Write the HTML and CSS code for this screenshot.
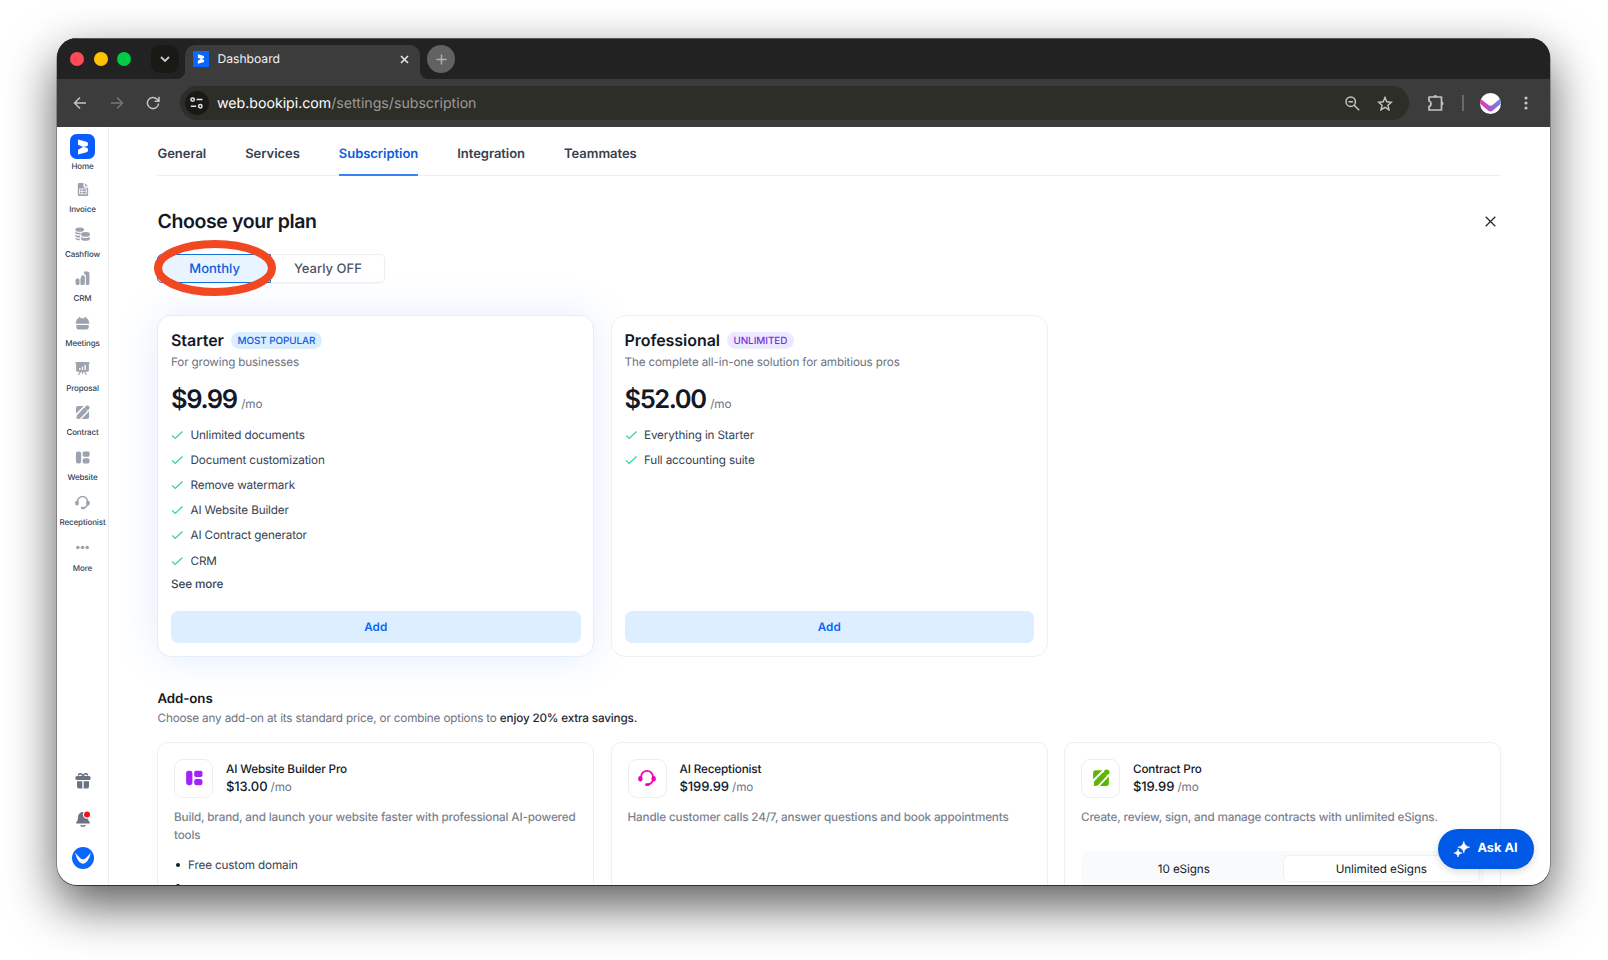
FILE: index.html
```html
<!DOCTYPE html>
<html lang="en">
<head>
<meta charset="utf-8">
<title>Dashboard</title>
<link rel="stylesheet" href="styles.css">
</head>
<body>
<svg class="defs" width="0" height="0" aria-hidden="true">
  <symbol id="website" viewBox="0 0 16 16"><rect x="1" y="1.5" width="5.6" height="13" rx="2.2"/><rect x="8.2" y="1.5" width="7.3" height="5.6" rx="1.5"/><rect x="8.2" y="8.9" width="7.3" height="5.6" rx="2"/></symbol>
  <symbol id="headset" viewBox="0 0 16 16"><path d="M2.7 8.2V7A5.3 5.3 0 0 1 13.3 7v1.5c0 3-1.800 5-4.600 5.300" fill="none" stroke="currentColor" stroke-width="1.6"/><rect x=".2" y="6.200" width="3.800" height="5" rx="1.800"/><rect x="12" y="6.200" width="3.800" height="5" rx="1.800"/><rect x="6.300" y="12.600" width="4" height="2.600" rx="1.300"/></symbol>
  <symbol id="contract" viewBox="0 0 16 16"><path d="M3.300 1H9.200L1 9.200V3.300A2.300 2.300 0 0 1 3.300 1Z"/><path d="M9.900 2.600l3.500 3.500-8.300 8.500-3.500.4.300-3.900Z"/><circle cx="13.100" cy="2.900" r="2.400"/><path d="M15 6.600v6.100A2.300 2.300 0 0 1 12.700 15H6.900Z"/></symbol>
  <symbol id="check" viewBox="0 0 12 12"><path d="M1.200 6.500L4.200 9.500 11.500 2.500" fill="none" stroke="#34d399" stroke-width="1.200"/></symbol>
  <symbol id="brand" viewBox="0 0 12 16"><path d="M1 .5L9.500 2.700Q11 3.100 11 4.600V5.500Q11 7 9.500 7.300L6 8 9.500 8.600Q11 9 11 10.500V11.500Q11 12.800 9.600 13.200L1 15.500V10.800L6 8 1 5.800Z"/></symbol>
</svg>

<div class="window">
  <header class="tabstrip">
    <div class="lights"><i class="red"></i><i class="yellow"></i><i class="green"></i></div>
    <span class="tab-search"><svg width="10" height="7" viewBox="0 0 10 7"><path d="M1 1l4 4 4-4" fill="none" stroke="#ccc" stroke-width="1.800"/></svg></span>
    <div class="tab">
      <span class="favicon"><svg width="8" height="10"><use href="#brand"/></svg></span>
      <span class="tab-title">Dashboard</span>
      <svg width="9" height="9" viewBox="0 0 9 9"><path d="M1 1l7 7M8 1L1 8" stroke="#e3e3e3" stroke-width="1.700"/></svg>
    </div>
    <span class="new-tab"><svg width="11" height="11" viewBox="0 0 11 11"><path d="M5.500 .5v10M.5 5.500h10" stroke="#b0b0b0" stroke-width="1.500"/></svg></span>
  </header>

  <div class="toolbar">
    <svg class="nav-icon" width="14" height="14" viewBox="0 0 14 14"><path d="M13 7H1.800M7 1.500L1.500 7 7 12.500" fill="none" stroke="#c4c4c4" stroke-width="1.500"/></svg>
    <svg class="nav-icon" width="14" height="14" viewBox="0 0 14 14"><path d="M1 7h11.200M7 1.500L12.500 7 7 12.500" fill="none" stroke="#777" stroke-width="1.500"/></svg>
    <svg class="nav-icon" width="14" height="14" viewBox="0 0 14 14"><path d="M12.600 7.500A5.600 5.600 0 1 1 11.200 3.300L13 5M13 .8V5.200H8.600" fill="none" stroke="#c4c4c4" stroke-width="1.500"/></svg>
    <div class="address">
      <span class="site-info"><svg width="13" height="12" viewBox="0 0 13 12"><g fill="none" stroke="#e3e3e3" stroke-width="1.500"><circle cx="2.600" cy="2.600" r="1.700"/><path d="M6.500 2.600H12.500M.8 9.300H6.200"/><circle cx="10.300" cy="9.300" r="1.700"/></g></svg></span>
      <span class="url"><b>web.bookipi.com</b>/settings/subscription</span>
      <svg width="15" height="15" viewBox="0 0 15 15"><g fill="none" stroke="#c4c4c4" stroke-width="1.500"><circle cx="5.700" cy="5.700" r="4.700"/><path d="M9.200 9.200l5 5M3.500 5.700h4.400"/></g></svg>
      <svg width="16" height="15" viewBox="0 0 16 15"><path d="M8 1.500l1.800 4.300 4.700.4-3.600 3 1.100 4.600L8 11.300l-4 2.500 1.100-4.600-3.600-3 4.700-.4Z" fill="none" stroke="#c4c4c4" stroke-width="1.400"/></svg>
    </div>
    <svg class="puzzle" width="18" height="18" viewBox="0 0 18 18"><path d="M2 3H14.500V16H2V12.500C4.600 12 4.600 7.500 2 7Z" fill="none" stroke="#c4c4c4" stroke-width="1.700" stroke-linejoin="round"/><path d="M6.300 3a2 2 0 0 1 4 0ZM14.500 7.500a2 2 0 0 1 0 4Z" fill="#c4c4c4"/></svg>
    <i class="divider"></i>
    <svg class="profile" width="21" height="21" viewBox="0 0 21 21"><defs><linearGradient id="pg"><stop offset="0" stop-color="#f02fb4"/><stop offset="1" stop-color="#5c8ce8"/></linearGradient><clipPath id="pc"><circle cx="10.500" cy="10.500" r="10.500"/></clipPath></defs><circle cx="10.500" cy="10.500" r="10.500" fill="#fff"/><path clip-path="url(#pc)" d="M0 5.500L8.500 12Q10.500 13.300 12.500 12L21 5V10.500L13 17.500Q10.500 19.300 8 17.500L0 10.500Z" fill="url(#pg)"/></svg>
    <svg class="menu" width="4" height="14" viewBox="0 0 4 14" fill="#c4c4c4"><circle cx="2" cy="2" r="1.600"/><circle cx="2" cy="7" r="1.600"/><circle cx="2" cy="12" r="1.600"/></svg>
  </div>

  <div class="page">
    <nav class="sidebar">
      <div class="side-items">
        <a class="side-item home"><span class="home-icon"><svg width="12" height="16"><use href="#brand"/></svg></span><span>Home</span></a>
        <a class="side-item"><svg viewBox="0 0 16 16"><path d="M4.500 1H9v3a2 2 0 0 0 2 2h3v7.500A1.500 1.500 0 0 1 12.500 15h-8A1.500 1.500 0 0 1 3 13.500v-11A1.500 1.500 0 0 1 4.500 1ZM10.500 1.300L13.600 4.600H11.500a1 1 0 0 1-1-1Z"/><path d="M4.800 7.300h7.600v5.400H4.800Z M4.800 10h7.600M7.500 7.300v5.400" stroke="#fff" stroke-width=".8" fill="none"/></svg><span>Invoice</span></a>
        <a class="side-item"><svg viewBox="0 0 16 16"><ellipse cx="5" cy="2.800" rx="4.600" ry="2.300"/><path d="M.4 4.900C1.500 6.300 4 6.600 6 6.200v1.700C3 8.300 1 7.500.4 6.700ZM.4 8c.8 1.100 2.600 1.500 4.900 1.300v2C2.600 11.500.9 10.700.4 9.800ZM.6 11.400c.8.900 2.500 1.200 4.600 1.100v1.600c-2 0-4-.4-4.600-1.400Z"/><ellipse cx="11.200" cy="7.900" rx="4.700" ry="2.500"/><path d="M6.500 10.400c1.500 1.900 7.900 1.900 9.400 0v2.300c-.7 2.700-8.700 2.700-9.400 0Z"/></svg><span>Cashflow</span></a>
        <a class="side-item"><svg viewBox="0 0 16 16"><rect x=".6" y="8" width="4.200" height="7" rx="1.800"/><path d="M7.500 4.500H8.500A2 2 0 0 1 10.500 6.500V13a2 2 0 0 1-2 2H7.200A1.400 1.400 0 0 1 5.800 13.500V8Z"/><path d="M9.500 .5h3.900A2 2 0 0 1 15.400 2.500v10.500a2 2 0 0 1-2 2h-.8a1 1 0 0 1-1-1V5.500C11.500 4 10.500 3.300 9.500 3Z"/></svg><span>CRM</span></a>
        <a class="side-item"><svg viewBox="0 0 16 16"><path d="M4 1h1.800v1.300h4.400V1H12v1.400a3 3 0 0 1 2.600 2.400V7H1.400V4.800A3 3 0 0 1 4 2.400Z"/><rect x=".7" y="6" width="14.600" height="2.300" rx="1"/><path d="M1.400 9.500h13.200V12a2.500 2.500 0 0 1-2.500 2.500H3.900A2.500 2.500 0 0 1 1.400 12Z"/></svg><span>Meetings</span></a>
        <a class="side-item"><svg viewBox="0 0 16 16"><path d="M.5 1h15v1.600h-.7V10a1.500 1.500 0 0 1-1.500 1.500H11l1.800 2.800-1 .9L9.500 11.500H8.800v2H7.200v-2H6.500L4.200 15.200l-1-.9L5 11.500H2.700A1.500 1.500 0 0 1 1.200 10V2.600H.5Z"/><path d="M5.200 9.500V7.500M8 9.500V6M10.800 9.500V4.300" stroke="#fff" stroke-width="1.400"/></svg><span>Proposal</span></a>
        <a class="side-item"><svg><use href="#contract"/></svg><span>Contract</span></a>
        <a class="side-item"><svg><use href="#website"/></svg><span>Website</span></a>
        <a class="side-item"><svg><use href="#headset"/></svg><span>Receptionist</span></a>
        <a class="side-item more"><svg viewBox="0 0 16 16"><circle cx="3" cy="8" r="1.900"/><circle cx="8" cy="8" r="1.900"/><circle cx="13" cy="8" r="1.900"/></svg><span>More</span></a>
      </div>
      <div class="side-bottom">
        <svg width="16" height="16" viewBox="0 0 16 16" fill="#6b7280"><path d="M8 3C6.500 0 3.500 0 3.500 2.500M8 3C9.500 0 12.500 0 12.500 2.500" fill="none" stroke="#6b7280" stroke-width="1.500"/><rect x=".4" y="3" width="15.200" height="4" rx="1.600"/><path d="M2 8.300H7.300V15.500H4A2 2 0 0 1 2 13.500ZM8.700 8.300H14V13.500A2 2 0 0 1 12 15.500H8.700Z"/></svg>
        <svg width="16" height="16" viewBox="0 0 16 16" fill="#6b7280"><path d="M8 1a5 5 0 0 0-5 5c0 3-.8 4.300-1.700 5.300-.6.700-.2 1.200.5 1.200h12.400c.7 0 1.100-.5.5-1.200C13.800 10.300 13 9 13 6A5 5 0 0 0 8 1Z"/><path d="M5.700 14.200c1.300 1.300 3.300 1.300 4.600 0" fill="none" stroke="#6b7280" stroke-width="1.300"/><circle cx="12" cy="3.600" r="3.600" fill="#f80b1c" stroke="#fff" stroke-width="1.200"/></svg>
        <svg width="22" height="22" viewBox="0 0 22 22"><circle cx="11" cy="11" r="11" fill="#0b66fb"/><path d="M3.300 5.500C7 10.500 9 12.300 11 12.300S15 10.500 18.700 5.500C17.500 13 13.500 16.800 11 16.800S4.500 13 3.300 5.500Z" fill="#fff"/></svg>
      </div>
    </nav>

    <main class="content">
      <div class="tabs"><a>General</a><a>Services</a><a class="active">Subscription</a><a>Integration</a><a>Teammates</a></div>
      <div class="heading">
        <h1>Choose your plan</h1>
        <svg width="11" height="11" viewBox="0 0 11 11"><path d="M.7 .7l9.600 9.600M10.300 .7L.7 10.300" stroke="#1f2937" stroke-width="1.300"/></svg>
      </div>
      <div class="period">
        <span class="period-option selected">Monthly</span><span class="period-option">Yearly OFF</span>
        <svg class="highlight" width="122" height="56" viewBox="0 0 122 56"><ellipse cx="61" cy="28" rx="57" ry="24" fill="none" stroke="#f24822" stroke-width="8"/></svg>
      </div>

      <section class="grid plans">
        <article class="plan popular">
          <div class="plan-name"><h2>Starter</h2><span class="badge">MOST POPULAR</span></div>
          <p class="plan-sub">For growing businesses</p>
          <div class="price"><strong>$9.99</strong><span>/mo</span></div>
          <ul class="features">
            <li><svg><use href="#check"/></svg>Unlimited documents</li>
            <li><svg><use href="#check"/></svg>Document customization</li>
            <li><svg><use href="#check"/></svg>Remove watermark</li>
            <li><svg><use href="#check"/></svg>AI Website Builder</li>
            <li><svg><use href="#check"/></svg>AI Contract generator</li>
            <li><svg><use href="#check"/></svg>CRM</li>
          </ul>
          <a class="see-more">See more</a>
          <div class="add">Add</div>
        </article>
        <article class="plan">
          <div class="plan-name"><h2>Professional</h2><span class="badge violet">UNLIMITED</span></div>
          <p class="plan-sub">The complete all-in-one solution for ambitious pros</p>
          <div class="price"><strong>$52.00</strong><span>/mo</span></div>
          <ul class="features">
            <li><svg><use href="#check"/></svg>Everything in Starter</li>
            <li><svg><use href="#check"/></svg>Full accounting suite</li>
          </ul>
          <div class="add">Add</div>
        </article>
      </section>

      <h3>Add-ons</h3>
      <p class="addons-sub">Choose any add-on at its standard price, or combine options to <b>enjoy 20% extra savings.</b></p>

      <section class="grid addons">
        <article class="addon">
          <div class="addon-head"><span class="addon-icon purple"><svg><use href="#website"/></svg></span><div><h4>AI Website Builder Pro</h4><div class="addon-price"><b>$13.00</b> /mo</div></div></div>
          <p class="addon-text">Build, brand, and launch your website faster with professional AI-powered tools</p>
          <ul class="bullets"><li>Free custom domain</li><li></li></ul>
        </article>
        <article class="addon">
          <div class="addon-head"><span class="addon-icon pink"><svg><use href="#headset"/></svg></span><div><h4>AI Receptionist</h4><div class="addon-price"><b>$199.99</b> /mo</div></div></div>
          <p class="addon-text">Handle customer calls 24/7, answer questions and book appointments</p>
        </article>
        <article class="addon">
          <div class="addon-head"><span class="addon-icon lime"><svg><use href="#contract"/></svg></span><div><h4>Contract Pro</h4><div class="addon-price"><b>$19.99</b> /mo</div></div></div>
          <p class="addon-text">Create, review, sign, and manage contracts with unlimited eSigns.</p>
          <div class="segmented"><span>10 eSigns</span><span class="on">Unlimited eSigns</span></div>
        </article>
      </section>
    </main>
    <div class="ask"><svg width="16" height="16" viewBox="0 0 16 16" fill="#fff"><path d="M9.800 .3C10.600 4 12 5.400 15.800 6.200 12 7 10.600 8.400 9.800 12.100 9 8.400 7.600 7 3.800 6.200 7.600 5.400 9 4 9.800 .3Z" stroke="#fff" stroke-width=".5"/><path d="M4 8.200C4.400 10.700 5.400 11.600 7.900 12 5.400 12.400 4.400 13.400 4 15.900 3.600 13.400 2.600 12.400.1 12 2.600 11.600 3.600 10.700 4 8.200Z" stroke="#fff" stroke-width=".8"/></svg>Ask AI</div>
  </div>
</div>
</body>
</html>
```
FILE: styles.css
```css
* { box-sizing: border-box; }
body { margin: 0; width: 1608px; height: 960px; overflow: hidden; padding: 38px 57px 0; background: #fff; font-family: Inter, "Liberation Sans", sans-serif; color: #111827; text-rendering: geometricPrecision; }
h1, h2, h3, h4, p, ul { margin: 0; padding: 0; }
ul { list-style: none; }
svg { display: block; flex: none; }
.defs { position: absolute; }

.window { width: 1493px; height: 847px; border-radius: 20px; overflow: hidden; background: #3c3c3c; box-shadow: 0 .5px 0 .4px rgba(0,0,0,.6), 0 20px 50px rgba(0,0,0,.66); }

/* browser chrome */
.tabstrip { height: 41px; background: #222; display: flex; padding: 6px 0 0 13px; border-top: 1.500px solid #575757; }
.lights { display: flex; gap: 9.500px; padding-top: 7px; width: 80.500px; }
.lights i { width: 14px; height: 14px; border-radius: 50%; }
.red { background: #ff4b58; }
.yellow { background: #ffc400; }
.green { background: #00ca48; }
.tab-search { width: 28px; height: 28px; border-radius: 9px; background: #191a15; display: flex; align-items: center; justify-content: center; margin-right: 6.500px; }
.tab { position: relative; width: 235px; height: 34px; background: #3c3c3c; border-radius: 10px 10px 0 0; display: flex; align-items: center; padding: 0 11px 6px 8px; }
.tab::before, .tab::after { content: ""; position: absolute; bottom: 0; width: 9px; height: 9px; }
.tab::before { left: -9px; background: radial-gradient(circle at 0 0, transparent 9px, #3c3c3c 9.500px); }
.tab::after { right: -9px; background: radial-gradient(circle at 100% 0, transparent 9px, #3c3c3c 9.500px); }
.favicon { width: 16px; height: 16px; background: #0b66fb; fill: #fff; display: flex; align-items: center; justify-content: center; margin-right: 8.500px; }
.tab-title { flex: 1; font-size: 12.200px; line-height: 14px; color: #f1f1f1; letter-spacing: -.05px; }
.new-tab { width: 28px; height: 28px; border-radius: 50%; background: #626262; margin-left: 7px; display: flex; align-items: center; justify-content: center; }
.toolbar { height: 48px; background: #3c3c3c; display: flex; align-items: center; padding: 0 22px 0 16px; }
.nav-icon { margin-right: 22.500px; }
.nav-icon:nth-child(3) { margin-right: 19.500px; }
.address { width: 1229px; height: 34px; border-radius: 17px; background: #2e2e29; display: flex; align-items: center; padding: 0 16px 0 5px; }
.address > svg + svg { margin-left: 17px; }
.site-info { width: 24px; height: 24px; border-radius: 50%; background: #191a15; display: flex; align-items: center; justify-content: center; margin-right: 8.500px; }
.url { flex: 1; font-size: 14.150px; color: #9b9b98; }
.url b { font-weight: 400; color: #fff; }
.puzzle { margin-left: 18px; }
.divider { width: 1.500px; height: 16px; background: #6a6a6a; margin: 0 16px 0 17.500px; }
.menu { margin-left: auto; }

/* page */
.page { position: relative; height: 758px; background: #fff; display: flex; overflow: hidden; }
.sidebar { width: 51.500px; border-right: 1px solid #eceef1; display: flex; flex-direction: column; justify-content: space-between; padding: 7px 0 16px .5px; }
.side-item { display: flex; flex-direction: column; align-items: center; height: 44.700px; padding-top: 2.500px; font-size: 8px; line-height: 10px; font-weight: 500; letter-spacing: -.12px; color: #374151; white-space: nowrap; }
.side-item svg { width: 15px; height: 15px; fill: #9ca3af; color: #9ca3af; margin-bottom: 7px; }
.side-item.home { padding-top: 0; height: 45.500px; }
.home-icon { width: 25px; height: 25px; border-radius: 6.500px; background: #0b5cff; display: flex; align-items: center; justify-content: center; margin-bottom: 2px; }
.side-item .home-icon svg { width: 12px; height: 16px; margin: 0; fill: #fff; }
.side-item.more svg { margin-bottom: 8px; }
.side-bottom { display: flex; flex-direction: column; align-items: center; gap: 22px; }
.side-bottom svg:last-child { margin-top: -2px; }

.content { flex: none; width: 1393px; padding: 0 0 0 48.500px; }
.tabs { width: 1344px; height: 49px; border-bottom: 1.500px solid #eceef1; display: flex; gap: 39px; padding: 16.500px 0 0 .5px; font-size: 13px; letter-spacing: -.04px; line-height: 20px; font-weight: 600; color: #374151; }
.tabs .active { height: 32.500px; color: #0b5cde; border-bottom: 2px solid #3b82f6; }
.heading { width: 1344px; display: flex; align-items: center; justify-content: space-between; padding: 0 5.500px 0 .5px; margin-top: 31px; height: 28px; }
.heading h1 { font-size: 19.500px; font-weight: 600; letter-spacing: -.38px; color: #111827; }
.period { position: relative; display: flex; width: 227.500px; height: 29px; margin-top: 19px; font-size: 13px; font-weight: 500; line-height: 28px; text-align: center; color: #4b5563; }
.period-option { width: 113.500px; padding-left: 1px; border: 1px solid #eceef1; border-left: 0; border-radius: 0 5px 5px 0; box-shadow: 0 1px 1px rgba(0,0,0,.04); }
.period-option.selected { width: 114.500px; border: 1px solid #1570d8; border-radius: 5px 0 0 5px; background: #e8f4ff; color: #0b5cde; }
.highlight { position: absolute; left: -3.500px; top: -14px; }

.grid { width: 1344px; display: grid; grid-template-columns: repeat(3, 1fr); column-gap: 16.500px; }
.plans { margin-top: 32px; height: 341.500px; }
.plan { border: 1px solid #eff0f3; border-radius: 14px; background: #fff; padding: 12px 12.500px 13px 13px; display: flex; flex-direction: column; }
.plan.popular { border-color: #e7edf7; box-shadow: 0 0 40px rgba(59,130,246,.15); }
.plan:not(.popular) { position: relative; }
.plan-name { display: flex; align-items: center; height: 24px; gap: 7px; }
.plan-name h2 { font-size: 16px; font-weight: 600; letter-spacing: -.05px; }
.badge { height: 17px; border-radius: 9px; padding: 0 6.500px; background: #dbeeff; color: #0b5cde; font-size: 9.900px; line-height: 18px; font-weight: 500; letter-spacing: -.05px; }
.badge.violet { background: #ede9fe; color: #7a2ee0; }
.plan-sub { font-size: 11.700px; letter-spacing: -.145px; line-height: 18px; margin-top: 1px; color: #6b7280; }
.price { display: flex; align-items: baseline; height: 34px; line-height: 34px; gap: 4.500px; margin-top: 11.500px; }
.price strong { font-size: 25.500px; font-weight: 600; letter-spacing: -1.400px; }
.price span { font-size: 11.700px; letter-spacing: -.1px; color: #6b7280; }
.features { margin-top: 5.500px; }
.features li { display: flex; align-items: center; height: 25.200px; font-size: 11.700px; letter-spacing: -.14px; color: #374151; }
.features svg { width: 12px; height: 12px; margin-right: 7.500px; }
.see-more { font-size: 11.700px; letter-spacing: -.1px; line-height: 18px; font-weight: 500; margin-top: 2px; color: #374151; }
.add { margin-top: auto; height: 32px; border-radius: 7px; background: #dceeff; color: #0b66fb; font-size: 11.700px; font-weight: 600; line-height: 32.500px; text-align: center; }

h3 { font-size: 13.300px; letter-spacing: -.1px; line-height: 20px; font-weight: 600; margin-top: 32.500px; padding-left: .5px; }
.addons-sub { font-size: 11.700px; letter-spacing: -.16px; line-height: 18px; padding-left: .5px; color: #6b7280; }
.addons-sub b { font-weight: 500; color: #1f2937; }
.addons { margin-top: 14.500px; height: 220px; }
.addon { border: 1px solid #eff0f3; border-radius: 10px; padding: 16px; }
.addon-head { display: flex; align-items: center; gap: 13px; height: 39px; }
.addon-icon { width: 39px; height: 39px; border: 1px solid #eceef1; border-radius: 9px; display: flex; align-items: center; justify-content: center; }
.addon-icon svg { width: 18px; height: 18px; fill: currentColor; }
.purple { color: #a422fb; }
.pink { color: #f500b8; }
.lime { color: #5eb500; }
.addon h4 { font-size: 11.700px; letter-spacing: -.14px; line-height: 18px; font-weight: 500; }
.addon-price { font-size: 11.700px; letter-spacing: -.1px; line-height: 18px; color: #6b7280; }
.addon-price b { font-size: 13px; font-weight: 500; color: #111827; }
.addon-text { font-size: 11.700px; letter-spacing: -.155px; line-height: 18.500px; font-weight: 500; margin-top: 10px; color: #7b8290; }
.bullets { margin-top: 9.500px; }
.bullets li { display: flex; align-items: center; height: 21.500px; font-size: 11.700px; letter-spacing: -.14px; color: #374151; }
.bullets li::before { content: ""; width: 4.500px; height: 4.500px; border-radius: 50%; background: #111827; margin: 0 8px 0 1.500px; }
.segmented { display: flex; height: 35px; margin-top: 24.500px; padding: 4px; border-radius: 7px; background: #f8fafc; font-size: 11.700px; letter-spacing: -.1px; line-height: 27px; text-align: center; color: #111827; }
.segmented span { flex: 1; border: 1px solid transparent; border-radius: 6px; }
.segmented .on { background: #fff; border-color: #eef0f3; }
.ask { position: absolute; right: 16px; bottom: 16.500px; width: 96px; height: 39.500px; border-radius: 20px; background: #0058e6; color: #fff; display: flex; align-items: center; justify-content: center; gap: 7px; font-size: 12.800px; font-weight: 700; box-shadow: 0 3px 9px rgba(0,0,0,.14); }
```
